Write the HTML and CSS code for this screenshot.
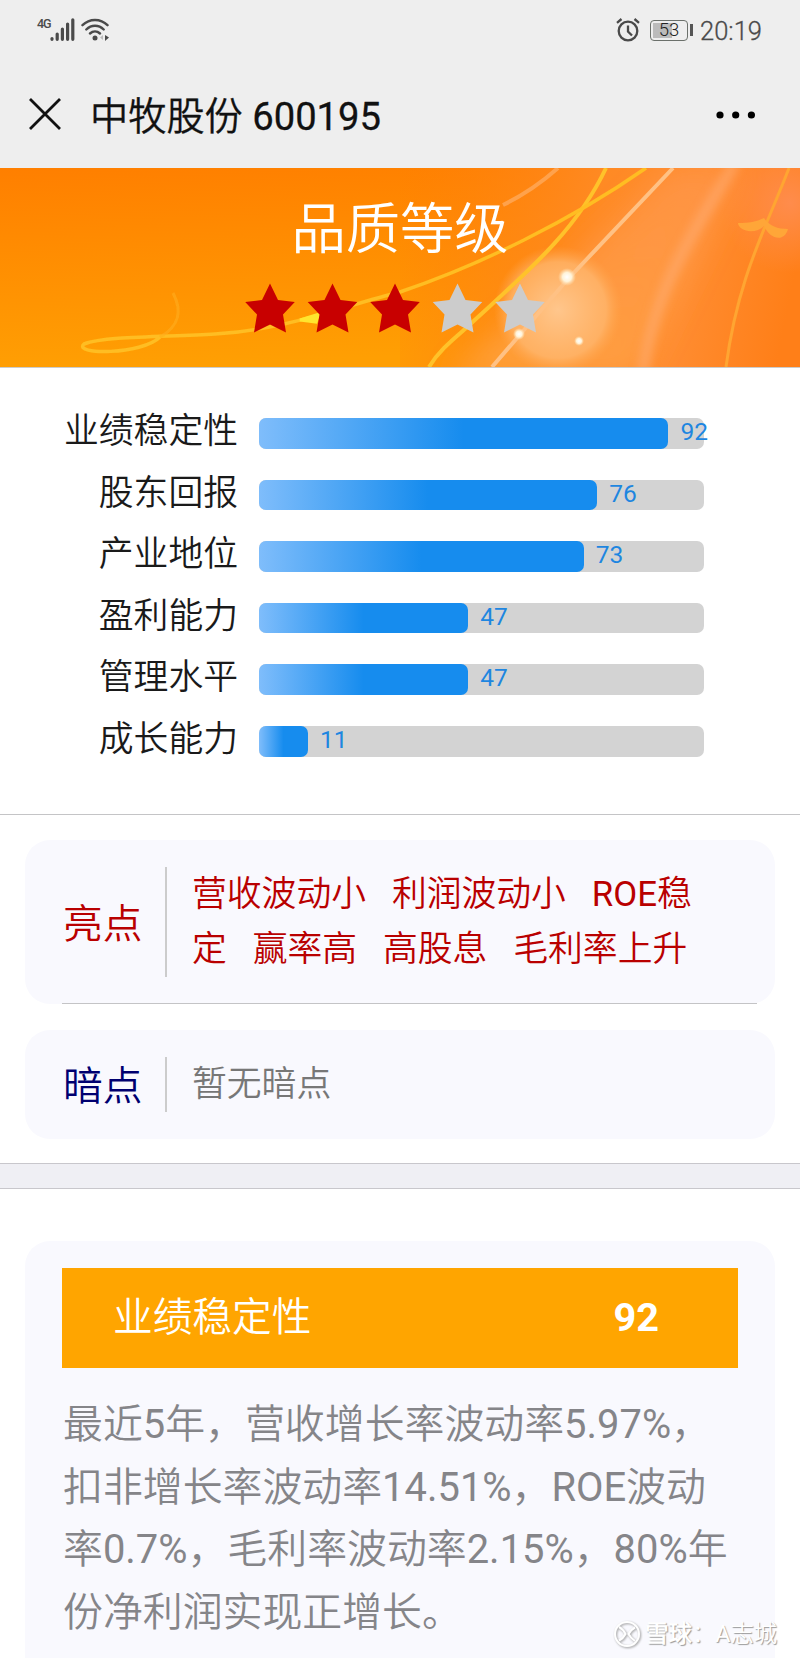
FILE: index.html
```
<!DOCTYPE html>
<html lang="zh-CN">

<head>
  <meta charset="UTF-8">
  <meta name="viewport" content="width=device-width, initial-scale=1.0">
  <title>中牧股份 600195</title>
  <link rel="stylesheet" href="styles.css">
</head>

<body>

  <!-- Phone status bar -->
  <div class="status-bar">
    <div class="status-left">
      <span class="network">4G</span>
      <svg class="signal" width="25" height="24" viewBox="0 0 25 24" stroke="#4a4a4a" stroke-width="3.2" stroke-linecap="round">
        <path d="M2 20.5v.8M7.2 16v5.3M12.4 11v10.3M17.6 6v15.3M22.8 1.8v19.5" />
      </svg>
      <svg class="wifi" width="29" height="24" viewBox="0 0 29 24" fill="none" stroke="#4a4a4a" stroke-width="2.4" stroke-linecap="round">
        <path d="M1.5 7.2C8.5 .2 19.5 .2 26.5 7.2M5.3 11.5c5-5 12.4-5 17.4 0M9 15.5c3-2.7 7-2.7 10 0" />
        <circle cx="14" cy="20" r="2.5" fill="#4a4a4a" stroke="none" />
        <path d="M22 17v5l-3-2.5z" fill="#bbb" stroke="none" />
        <path d="M24 17v6l4-3.5z" fill="#4a4a4a" stroke="none" />
      </svg>
    </div>
    <div class="status-right">
      <svg class="alarm" width="24" height="24" viewBox="0 0 24 24" fill="none" stroke="#4a4a4a" stroke-width="2.3">
        <circle cx="12" cy="13" r="9.3" />
        <path d="M12 7.5V13.5l4 4M1 4.8L5.5 1M23 4.8L18.5 1" />
      </svg>
      <div class="battery"><span>53</span></div>
      <div class="battery-tip"></div>
      <span class="clock">20:19</span>
    </div>
  </div>

  <!-- Title bar -->
  <div class="title-bar">
    <svg width="32" height="32" viewBox="0 0 32 32" stroke="#111" stroke-width="2.8">
      <path d="M1 1L31 31M31 1L1 31" />
    </svg>
    <h1>中牧股份 600195</h1>
    <svg class="more" width="40" height="8" viewBox="0 0 40 8">
      <circle cx="4" cy="4" r="3.6" />
      <circle cx="19.7" cy="4" r="3.6" />
      <circle cx="35.4" cy="4" r="3.6" />
    </svg>
  </div>

  <!-- Rating -->
  <div class="hero">
    <svg class="hero-bg" width="800" height="199" viewBox="0 0 800 199" fill="none">
      <defs>
        <linearGradient id="base" x1="0" y1="0" x2=".15" y2="1">
          <stop offset="0" stop-color="#ff7f00" />
          <stop offset="1" stop-color="#ff9f03" />
        </linearGradient>
        <linearGradient id="right" x1="400" y1="0" x2="800" y2="80" gradientUnits="userSpaceOnUse">
          <stop offset="0" stop-color="#ff7d0a" stop-opacity="0" />
          <stop offset=".5" stop-color="#ff8a24" />
          <stop offset=".75" stop-color="#ff8c30" />
          <stop offset="1" stop-color="#ff7f18" />
        </linearGradient>
        <linearGradient id="beam" x1="0" y1="0" x2="0" y2="1">
          <stop offset="0" stop-color="#ff9a58" stop-opacity=".5" />
          <stop offset="1" stop-color="#ffab50" stop-opacity=".6" />
        </linearGradient>
        <radialGradient id="halo">
          <stop offset="0" stop-color="#ffc68c" />
          <stop offset=".75" stop-color="#ffb870" stop-opacity=".75" />
          <stop offset="1" stop-color="#ffa850" stop-opacity="0" />
        </radialGradient>
        <radialGradient id="pink">
          <stop offset="0" stop-color="#ff8c4c" />
          <stop offset="1" stop-color="#ff8c4c" stop-opacity="0" />
        </radialGradient>
        <radialGradient id="spark">
          <stop offset="0" stop-color="#fff" />
          <stop offset=".5" stop-color="#fff3d8" />
          <stop offset="1" stop-color="#ffe0b0" stop-opacity="0" />
        </radialGradient>
        <filter id="soft" x="-30%" y="-30%" width="160%" height="160%"><feGaussianBlur stdDeviation="14" /></filter>
        <filter id="glow" x="-30%" y="-30%" width="160%" height="160%"><feGaussianBlur stdDeviation="4" /></filter>
        <filter id="fine"><feGaussianBlur stdDeviation=".7" /></filter>
      </defs>
      <rect width="800" height="199" fill="url(#base)" />
      <rect x="400" width="400" height="199" fill="url(#right)" />
      <path d="M670 0L740 0L636 210H450L560 110z" fill="url(#beam)" filter="url(#soft)" />
      <circle cx="790" cy="35" r="70" fill="url(#pink)" />
      <circle cx="558" cy="142" r="64" fill="url(#halo)" />
      <path d="M735 -5C690 70 655 120 643 204" stroke="#ffb07a" stroke-width="12" opacity=".5" filter="url(#glow)" />
      <g filter="url(#fine)">
        <path d="M558 0Q532 23 503 37" stroke="#ffa95a" stroke-width="4" opacity=".8" />
        <path d="M673 0L568 111L492 199" stroke="#ffc184" stroke-width="4" />
        <path d="M606 0C575 66 520 110 465 161C450 174 438 184 429 199" stroke="#ffc229" stroke-width="4" />
        <path d="M646 0C570 53 480 97 400 124C340 139 285 162 215 166C165 169 105 168 84 176C72 187 142 187 160 169" stroke="#ffbd20" stroke-width="3.5" />
        <path d="M160 169C180 158 182 142 173 125" stroke="#ffad20" stroke-width="3" opacity=".6" />
        <path d="M789 0C767 58 738 108 726 199" stroke="#ffa530" stroke-width="3" />
        <path d="M764 58C754 68 738 62 738 55C749 55 756 54 764 50C769 58 778 61 788 61C784 75 770 71 764 58z" fill="#ffa638" />
        <path d="M300 152L319 146L316 154z" fill="#ffe52e" stroke="#ffe52e" stroke-width="3" />
      </g>
      <circle cx="567" cy="109" r="9" fill="url(#spark)" />
      <circle cx="519" cy="166" r="6" fill="url(#spark)" />
      <circle cx="579" cy="173" r="5" fill="url(#spark)" />
    </svg>
    <h2>品质等级</h2>
    <svg class="stars" width="300" height="50" viewBox="0 0 300 50">
      <defs>
        <path id="star" d="M25 .5L33 17L49.8 19L38 31.5L41 49.5L25 41.5L9 49.5L12 31.5L.2 19L17 17z" />
      </defs>
      <use href="#star" fill="#c80000" />
      <use href="#star" x="62.5" fill="#c80000" />
      <use href="#star" x="125" fill="#c80000" />
      <use href="#star" x="187.5" fill="#ccc" />
      <use href="#star" x="250" fill="#ccc" />
    </svg>
  </div>

  <!-- Score bars -->
  <div class="scores">
    <div class="score">
      <span class="label">业绩稳定性</span>
      <div class="track"><div class="fill" style="width: 92%"></div><span class="value">92</span></div>
    </div>
    <div class="score">
      <span class="label">股东回报</span>
      <div class="track"><div class="fill" style="width: 76%"></div><span class="value">76</span></div>
    </div>
    <div class="score">
      <span class="label">产业地位</span>
      <div class="track"><div class="fill" style="width: 73%"></div><span class="value">73</span></div>
    </div>
    <div class="score">
      <span class="label">盈利能力</span>
      <div class="track"><div class="fill" style="width: 47%"></div><span class="value">47</span></div>
    </div>
    <div class="score">
      <span class="label">管理水平</span>
      <div class="track"><div class="fill" style="width: 47%"></div><span class="value">47</span></div>
    </div>
    <div class="score">
      <span class="label">成长能力</span>
      <div class="track"><div class="fill" style="width: 11%"></div><span class="value">11</span></div>
    </div>
  </div>

  <!-- Highlights and weak points -->
  <div class="points">
    <div class="card good">
      <div class="card-name">亮点</div>
      <div class="card-text">营收波动小&nbsp;&nbsp; 利润波动小&nbsp;&nbsp; ROE稳<br>定&nbsp;&nbsp; 赢率高&nbsp;&nbsp; 高股息&nbsp;&nbsp; 毛利率上升</div>
    </div>
    <div class="card bad">
      <div class="card-name">暗点</div>
      <div class="card-text">暂无暗点</div>
    </div>
  </div>

  <div class="separator"></div>

  <!-- Detail -->
  <div class="detail">
    <div class="banner">
      <span>业绩稳定性</span>
      <strong>92</strong>
    </div>
    <p>最近5年，营收增长率波动率5.97%，<br>扣非增长率波动率14.51%，ROE波动<br>率0.7%，毛利率波动率2.15%，80%年<br>份净利润实现正增长。</p>
  </div>

  <div class="watermark">
    <svg width="28" height="28" viewBox="0 0 28 28" fill="none" stroke="#fff" stroke-width="2">
      <circle cx="14" cy="14" r="12" />
      <path d="M6 7c4 2 5 4 6.5 7C11 17 9 19 6 20.5M22 7.5c-3 1.5-5 3.5-6.5 6.5C17 17 19 19 22 21" />
    </svg>
    <span><b>雪球</b>：A志城</span>
  </div>

</body>

</html>
```
FILE: styles.css
```
body {
  position: relative;
  height: 1659px;
  margin: 0;
  overflow: hidden;
  background-color: #fff;
  font-family: Roboto, "Noto Sans CJK SC DemiLight", "Noto Sans CJK SC", sans-serif;
}

h1,
h2,
p {
  margin: 0;
  font-weight: normal;
}

svg {
  display: block;
  flex: none;
}

/* status bar */
.status-bar {
  display: flex;
  justify-content: space-between;
  height: 60px;
  padding: 0 38px 0 37px;
  background-color: #eee;
  color: #4a4a4a;
}

.status-left,
.status-right {
  display: flex;
  align-items: center;
}

.status-left {
  align-items: flex-start;
  padding-top: 18px;
}

.network {
  width: 13px;
  font: 500 12.5px/12px Roboto, sans-serif;
  letter-spacing: -1px;
}

.wifi {
  margin-left: 6px;
}

.alarm {
  margin-right: 10px;
}

.battery {
  box-sizing: border-box;
  width: 38px;
  height: 21px;
  padding: 2px;
  border: 1px solid #6b706b;
  border-radius: 4px;
  background: linear-gradient(#bbb, #bbb) 2px 2px / 19px 15px no-repeat;
  font-size: 18.5px;
  font-weight: 300;
  line-height: 15px;
  text-align: center;
  color: #222;
}

.battery-tip {
  width: 3px;
  height: 12px;
  margin: 0 7px 0 2px;
  background-color: #555;
}

.clock {
  padding-top: 1px;
  font-size: 25.5px;
  font-weight: 300;
  -webkit-text-stroke: 0.3px #4a4a4a;
}

/* title bar */
.title-bar {
  display: flex;
  align-items: center;
  height: 108px;
  padding: 0 44px 0 29px;
  background-color: #eee;
}

.title-bar h1 {
  flex: 1;
  margin: 6px 0 0 29px;
  font-size: 38.2px;
  line-height: 48px;
  color: #111;
  -webkit-text-stroke: 0.3px #111;
}

.more {
  margin-top: 2px;
}

/* rating */
.hero {
  position: relative;
  height: 199px;
  border-bottom: 1px solid #ccc;
}

.hero-bg {
  position: absolute;
  left: 0;
  top: 0;
}

.hero h2 {
  position: relative;
  padding-top: 32px;
  font-size: 54.3px;
  line-height: 60px;
  text-align: center;
  color: #fff;
}

.stars {
  position: relative;
  margin: 23px auto 0 245px;
}

/* score bars */
.scores {
  height: 396px;
  padding-top: 50px;
  border-bottom: 1px solid #c4c4c6;
}

.score {
  display: flex;
  height: 30.7px;
  margin-bottom: 30.9px;
}

.label {
  width: 238px;
  margin-right: 21px;
  font-size: 34.8px;
  line-height: 27px;
  text-align: right;
  color: #1a1a1a;
}

.track {
  display: flex;
  width: 445px;
  border-radius: 7px;
  background-color: #d3d3d3;
  white-space: nowrap;
}

.fill {
  flex: none;
  border-radius: 7px;
  background-image: linear-gradient(to right, #7fbdfb, #168cee 50%);
}

.value {
  margin-left: 12px;
  font-size: 24.5px;
  line-height: 28px;
  color: #1e86e0;
}

/* highlight cards */
.points {
  padding: 25px 25px 24px;
}

.card {
  position: relative;
  display: flex;
  align-items: center;
  margin-bottom: 26px;
  padding: 27px 0 27px 38px;
  border-radius: 25px;
  background-color: #f9f9fe;
}

.card:last-child {
  margin-bottom: 0;
}

.card-name {
  width: 102px;
  padding-top: 5px;
  font-size: 39.7px;
  line-height: 48px;
}

.card-text {
  flex: 1;
  padding-left: 25px;
  border-left: 2px solid #ccc;
  font-size: 34.8px;
  line-height: 55px;
}

.good {
  color: #b90000;
}

.good::after {
  content: "";
  position: absolute;
  left: 37px;
  right: 18px;
  bottom: 0;
  height: 1px;
  background-color: #c4c4c6;
}

.bad .card-name {
  color: #000070;
}

.bad .card-text {
  color: #777;
}

.separator {
  height: 24px;
  border-top: 1px solid #c8c7cc;
  border-bottom: 1px solid #c8c7cc;
  background-color: #efeff4;
}

/* detail card */
.detail {
  height: 390px;
  margin: 52px 25px 0;
  padding: 27px 37px 0;
  border-radius: 25px 25px 0 0;
  background-color: #f9f9fe;
}

.banner {
  display: flex;
  justify-content: space-between;
  align-items: center;
  height: 100px;
  padding: 0 79px 0 51px;
  background-color: #ffa500;
  color: #fff;
  font-size: 39.7px;
}

.banner span {
  padding-bottom: 10px;
}

.banner strong {
  padding-bottom: 2px;
}

.detail p {
  margin: 26px 0 0 1px;
  font-size: 39.9px;
  line-height: 62.5px;
  white-space: nowrap;
  color: #858589;
}

/* watermark */
.watermark {
  position: absolute;
  right: 23px;
  bottom: 10px;
  display: flex;
  align-items: center;
  gap: 4px;
  font-size: 23.3px;
  line-height: 30px;
  color: #fff;
  text-shadow: 1px 1px 1px #999;
}

.watermark svg {
  filter: drop-shadow(1px 1px 1px #999);
}
```
